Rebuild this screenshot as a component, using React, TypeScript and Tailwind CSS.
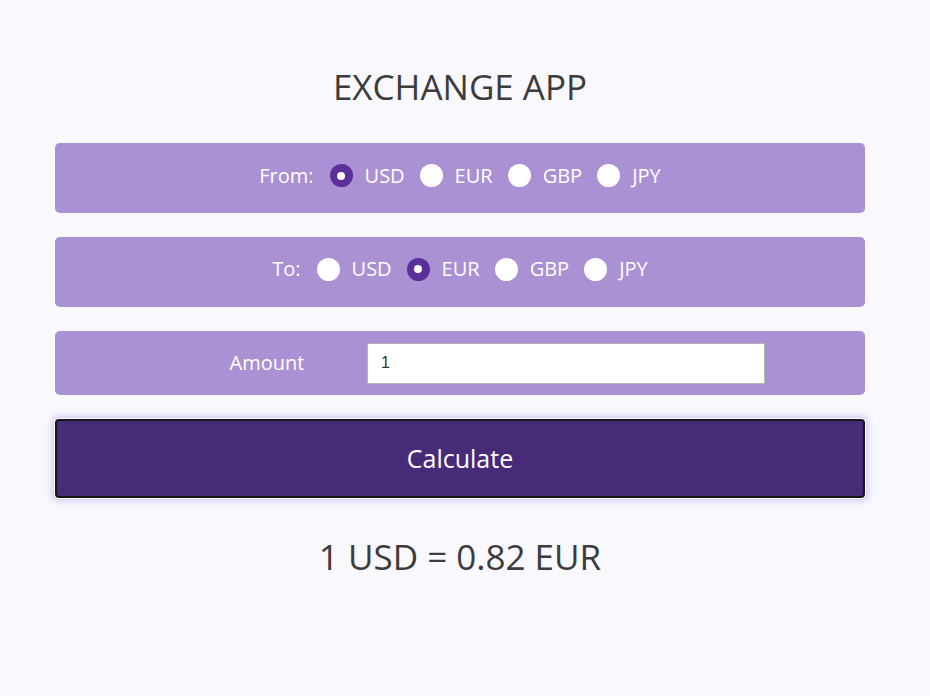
import React, { useState } from "react";

const CURS = ["USD", "EUR", "GBP", "JPY"];

function Radio({ checked, onClick }: { checked: boolean; onClick: () => void }) {
  return (
    <button
      onClick={onClick}
      className={
        "flex h-[23px] w-[23px] items-center justify-center rounded-full " +
        (checked ? "bg-[#5b2f9a]" : "bg-white")
      }
    >
      {checked && <span className="block h-[8px] w-[8px] rounded-full bg-white" />}
    </button>
  );
}

function Row({ label, value, setValue, pb }: { label: string; value: string; setValue: (v: string) => void; pb: string }) {
  return (
    <div className={"flex h-[70px] items-center justify-center rounded-[5px] bg-[#aa91d4] text-[20px] text-white " + pb}>
      <span className="mr-[16px]">{label}</span>
      {CURS.map((c, i) => (
        <div key={c} className={"flex items-center " + (i < CURS.length - 1 ? "mr-[15px]" : "")}>
          <Radio checked={value === c} onClick={() => setValue(c)} />
          <span className="ml-[12px]">{c}</span>
        </div>
      ))}
    </div>
  );
}

export default function App() {
  const [from, setFrom] = useState("USD");
  const [to, setTo] = useState("EUR");
  const [amount, setAmount] = useState("1");
  return (
    <div
      className="min-h-[696px] w-full bg-[#f8f8fd] pt-[63px] text-[#3c3c3c]"
      style={{ fontFamily: '"Open Sans", "Noto Sans", sans-serif' }}
    >
      <div className="ml-[55px] w-[810px]">
        <h1 className="mb-[32px] text-center text-[35px] leading-[48px] font-normal text-[#3c3c3c]">EXCHANGE APP</h1>
        <div className="flex flex-col gap-[24px]">
          <Row label="From:" value={from} setValue={setFrom} pb="pb-[5px]" />
          <Row label="To:" value={to} setValue={setTo} pb="pb-[6px]" />
          <div className="flex h-[64px] items-center rounded-[5px] bg-[#aa91d4] pl-[112px]">
            <span className="w-[200px] text-center text-[20px] text-white">Amount</span>
            <input
              value={amount}
              onChange={(e) => setAmount(e.target.value)}
              className="h-[41px] w-[398px] border border-[#b4b4b4] bg-white px-[13px] text-[16px] text-[#333]"
              style={{ fontFamily: '"Liberation Sans", Arial, sans-serif' }}
            />
          </div>
          <button className="h-[79px] w-full rounded-[4px] border-2 border-[#161616] bg-[#472a78] text-[25px] text-white shadow-[0_0_0_1px_#ffffff,0_0_6px_3px_rgba(185,155,240,0.55)]">
            Calculate
          </button>
        </div>
        <div className="mt-[35px] text-center text-[35px] leading-[48px] font-normal text-[#3c3c3c]">1 USD = 0.82 EUR</div>
      </div>
    </div>
  );
}
